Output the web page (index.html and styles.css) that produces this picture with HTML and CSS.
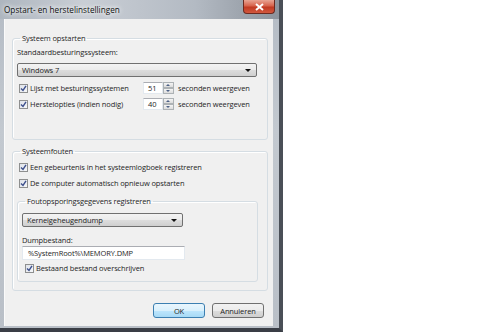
FILE: index.html
```html
<!DOCTYPE html>
<html lang="nl">

<head>
    <meta charset="UTF-8">
    <title>Opstart- en herstelinstellingen</title>
    <link rel="stylesheet" href="styles.css">
</head>

<body>
    <div class="window">
        <div class="titlebar">
            <span class="title">Opstart- en herstelinstellingen</span>
            <span class="close">
                <svg width="9" height="8" viewBox="0 0 9 8">
                    <path d="M1 1 L8 7 M8 1 L1 7" stroke="#fff" stroke-width="2" />
                </svg>
            </span>
        </div>

        <div class="client">
            <fieldset class="group start">
                <legend>Systeem opstarten</legend>
                <div class="label">Standaardbesturingssysteem:</div>
                <div class="combo os"><span>Windows 7</span><i class="arrow"></i></div>

                <div class="row timed">
                    <label class="check"><span class="box"><svg width="7" height="7" viewBox="0 0 7 7"><path d="M1 3.5 L3 5.5 L6 0.8" fill="none" stroke="#3d4f8c" stroke-width="1.4" /></svg></span>Lijst met besturingssystemen</label>
                    <div class="spin">
                        <span class="spin-val">51</span>
                        <span class="spin-btns"><b class="up"></b><b class="down"></b></span>
                    </div>
                    <span>seconden weergeven</span>
                </div>
                <div class="row timed">
                    <label class="check"><span class="box"><svg width="7" height="7" viewBox="0 0 7 7"><path d="M1 3.5 L3 5.5 L6 0.8" fill="none" stroke="#3d4f8c" stroke-width="1.4" /></svg></span>Herstelopties (indien nodig)</label>
                    <div class="spin">
                        <span class="spin-val">40</span>
                        <span class="spin-btns"><b class="up"></b><b class="down"></b></span>
                    </div>
                    <span>seconden weergeven</span>
                </div>
            </fieldset>

            <fieldset class="group errors">
                <legend>Systeemfouten</legend>
                <div class="row">
                    <label class="check"><span class="box"><svg width="7" height="7" viewBox="0 0 7 7"><path d="M1 3.5 L3 5.5 L6 0.8" fill="none" stroke="#3d4f8c" stroke-width="1.4" /></svg></span>Een gebeurtenis in het systeemlogboek registreren</label>
                </div>
                <div class="row">
                    <label class="check"><span class="box"><svg width="7" height="7" viewBox="0 0 7 7"><path d="M1 3.5 L3 5.5 L6 0.8" fill="none" stroke="#3d4f8c" stroke-width="1.4" /></svg></span>De computer automatisch opnieuw opstarten</label>
                </div>

                <fieldset class="group debug">
                    <legend>Foutopsporingsgegevens registreren</legend>
                    <div class="combo dump"><span>Kernelgeheugendump</span><i class="arrow"></i></div>
                    <div class="label dumpfile">Dumpbestand:</div>
                    <div class="textbox">%SystemRoot%\MEMORY.DMP</div>
                    <div class="row">
                        <label class="check"><span class="box"><svg width="7" height="7" viewBox="0 0 7 7"><path d="M1 3.5 L3 5.5 L6 0.8" fill="none" stroke="#3d4f8c" stroke-width="1.4" /></svg></span>Bestaand bestand overschrijven</label>
                    </div>
                </fieldset>
            </fieldset>

            <div class="buttons">
                <button class="btn default">OK</button>
                <button class="btn">Annuleren</button>
            </div>
        </div>
    </div>
</body>

</html>
```

FILE: styles.css
```css
body {
    margin: 0;
    background-color: #ffffff;
    font-family: "Open Sans", "Noto Sans", sans-serif;
    font-size: 7.5px;
    letter-spacing: -0.12px;
    color: #1e1e1e;
}

.window {
    box-sizing: border-box;
    width: 283px;
    height: 332px;
    background: linear-gradient(to bottom, #b4bbc4, #c3c9d0 40%, #b9bfc7);
    border-right: 4px solid #4a4f57;
    border-bottom: 4px solid #3a3e46;
}

.titlebar {
    height: 19px;
    display: flex;
    justify-content: space-between;
    align-items: flex-start;
    background: linear-gradient(to right, #aeb6bf, #c9ced5 30%, #b3bac3 70%, #8c939c);
}

.title {
    padding-left: 4px;
    line-height: 19px;
    font-size: 8.2px;
    letter-spacing: 0;
    color: #111;
    text-shadow: 0 0 4px #fff, 0 0 6px #fff;
}

.close {
    width: 32px;
    height: 14px;
    margin-right: 4px;
    box-sizing: border-box;
    display: flex;
    align-items: center;
    justify-content: center;
    background: linear-gradient(to bottom, #e8a493, #d7634c 45%, #c13a22 55%, #d2583e);
    border: 1px solid #6b2a20;
    border-top: none;
    border-radius: 0 0 4px 4px;
}

.client {
    box-sizing: border-box;
    width: 269px;
    height: 307px;
    margin-left: 4px;
    padding: 14px 5px 0 7px;
    background-color: #f0f0f0;
    border-left: 1px solid #fafafa;
}

.group {
    margin: 0;
    border: 1px solid #d5dde3;
    border-radius: 3px;
    box-shadow: inset 1px 1px 0 #fff;
    min-width: 0;
}

.group legend {
    padding: 0 2px;
    margin-left: 3px;
    line-height: 10px;
}

.start {
    padding: 0 10px 29px 4px;
}

.errors {
    margin-top: 6px;
    padding: 0 9px 8px 4px;
}

.debug {
    margin-top: 7px;
    padding: 0 9px 7px 4px;
}

.label {
    margin-top: 4px;
    line-height: 10px;
}

.combo {
    box-sizing: border-box;
    height: 14px;
    display: flex;
    align-items: center;
    justify-content: space-between;
    padding: 0 5px 0 4px;
    background: linear-gradient(to bottom, #f3f3f3, #ebebeb 50%, #dddddd 50%, #cfcfcf);
    border: 1px solid #707070;
    border-radius: 2px;
}

.os {
    margin-top: 6px;
}

.dump {
    width: 161px;
    margin-top: 7px;
}

.arrow {
    width: 0;
    height: 0;
    border-left: 3px solid transparent;
    border-right: 3px solid transparent;
    border-top: 3px solid #111;
}

.row {
    height: 12px;
    display: flex;
    align-items: center;
    margin-top: 5px;
}

.row + .row {
    margin-top: 4px;
}

.check {
    display: flex;
    align-items: center;
    padding-left: 2px;
}

.box {
    box-sizing: border-box;
    width: 9px;
    height: 9px;
    margin-right: 2px;
    display: flex;
    align-items: center;
    justify-content: center;
    background: linear-gradient(135deg, #dfe3ea, #f6f7f9);
    border: 1px solid #8e8f8f;
}

.timed .check {
    width: 124px;
}

.spin {
    display: flex;
    height: 12px;
    margin-right: 4px;
}

.spin-val {
    box-sizing: border-box;
    width: 20px;
    padding-left: 4px;
    line-height: 11px;
    background-color: #fff;
    border: 1px solid #e3e9ef;
    border-top-color: #abadb3;
}

.spin-btns {
    width: 11px;
    display: flex;
    flex-direction: column;
}

.spin-btns b {
    flex: 1;
    position: relative;
    background: linear-gradient(to bottom, #f4f4f4, #dcdcdc);
    border: 1px solid #adb2b5;
}

.spin-btns b::after {
    content: "";
    position: absolute;
    left: 2px;
    top: 1px;
    border-left: 2px solid transparent;
    border-right: 2px solid transparent;
}

.up::after {
    border-bottom: 2px solid #4d6185;
}

.down::after {
    border-top: 2px solid #4d6185;
}

.dumpfile {
    margin-top: 8px;
}

.textbox {
    box-sizing: border-box;
    width: 163px;
    height: 14px;
    margin-top: 1px;
    padding-left: 5px;
    line-height: 12px;
    background-color: #fff;
    border: 1px solid #e3e9ef;
    border-top-color: #abadb3;
}

.debug .row {
    margin-top: 2px;
    padding-left: 1px;
}

.buttons {
    display: flex;
    justify-content: flex-end;
    gap: 7px;
    margin-top: 12px;
    padding-right: 4px;
}

.btn {
    box-sizing: border-box;
    width: 52px;
    height: 15px;
    padding: 0;
    font-family: inherit;
    font-size: 7.5px;
    letter-spacing: -0.12px;
    color: #1e1e1e;
    background: linear-gradient(to bottom, #f2f2f2, #ebebeb 50%, #dddddd 50%, #cfcfcf);
    border: 1px solid #707070;
    border-radius: 3px;
}

.default {
    border-color: #3c7fb1;
    background: linear-gradient(to bottom, #eaf6fd, #d9f0fc 50%, #bee6fd 50%, #a7d9f5);
}
```
